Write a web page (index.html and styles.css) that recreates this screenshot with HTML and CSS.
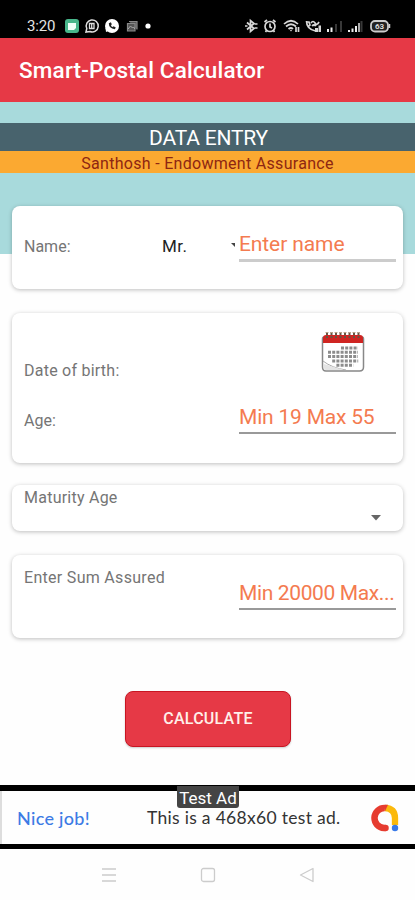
FILE: index.html
```html
<!DOCTYPE html>
<html lang="en">
<head>
<meta charset="utf-8">
<meta name="viewport" content="width=device-width, initial-scale=1">
<title>Smart-Postal Calculator</title>
<link rel="stylesheet" href="styles.css">
</head>
<body>
<div class="status">
  <span class="time">3:20</span>
  <svg class="status-left" width="90" height="16" viewBox="0 0 90 16">
    <rect x="1" y="1" width="14" height="14" rx="3" fill="#48b68b"/>
    <path d="M4 5h8v5l-2 2H4z" fill="#effff8"/>
    <path d="M22 14l.8-3.5A6 6 0 1 1 26 13.5z" fill="none" stroke="#ddd" stroke-width="1.5"/>
    <path d="M25.500 5.500h4.500v5h-4.500zM27.700 5.500v5" fill="none" stroke="#ddd" stroke-width="1.3"/>
    <circle cx="48" cy="8" r="7" fill="#fff"/>
    <path d="M42 14l-.5-4 3 3z" fill="#fff"/>
    <path d="M44.8 5.2q0 5 6 6l1-1.8-2.2-1.1-.9.8q-1.4-.6-1.7-1.9l.8-.9-.9-2z" fill="#222"/>
    <path d="M65 3.5h8v8M63.5 5.5h7.5v7.5h-7.5z" fill="#555" stroke="#888" stroke-width="1.2"/>
    <path d="M64 11l2.5-3 2 2 1-1 1.5 2" fill="none" stroke="#aaa"/>
    <circle cx="84" cy="8" r="2.6" fill="#fff"/>
  </svg>
  <svg class="status-right" width="148" height="16" viewBox="0 0 148 16">
    <g fill="none" stroke="#d8d8d8" stroke-width="1.700">
      <path d="M3 4.5l7 6-3.500 3V2.500L10 5.500l-7 6"/>
      <path d="M1 8h2.500M10.500 6h3M10.500 10h3"/>
      <circle cx="26" cy="8.500" r="5"/><path d="M20.500 4l2.500-2M31.500 4l-2.500-2M26 5.500v3.500l2 1M22.500 12.500l-1 1.500M29.500 12.500l1 1.500"/>
      <path d="M40 6q7-6.500 14 0M42 8.500q5-4.500 10 0M44.500 11q2.500-2 4.500 0M52 9v5M54.500 9v5"/>
      <path d="M62.500 3q0 8 9 10M62 4h3l1 3-1.500 1.500M67 5q2-3 4 0t4-1M68 8q2-2 4 0"/>
    </g>
    <path d="M46 12.500l1-1 1 1-1 1zM71 10h3v4h-3zM74.500 7.500H77V14h-2.500z" fill="#d8d8d8"/>
    <g fill="#ededed"><path d="M83 11h2v3h-2zM86.500 9.500h2V14h-2zM104 12h2v2h-2zM107.500 10.500h2V14h-2zM111 8h2v6h-2z"/></g>
    <path d="M91 6h2v8h-2zM96 3h2v11h-2zM116.500 3h2v11h-2z" fill="#383838"/>
    <path d="M114 5h2v9h-2z" fill="#aaa"/>
    <rect x="127" y="3" width="17" height="10.500" rx="4" fill="#222" stroke="#ccc" stroke-width="1.800"/>
    <path d="M145.500 6v4" stroke="#ccc" stroke-width="1.500"/>
    <text x="135.500" y="11" text-anchor="middle" class="battery">63</text>
  </svg>
</div>
<header class="appbar"><h1>Smart-Postal Calculator</h1></header>
<main>
  <h2>DATA ENTRY</h2>
  <p class="plan">Santhosh - Endowment Assurance</p>
  <form class="cards">
    <section class="card name-card">
      <span class="label">Name:</span>
      <span class="prefix">Mr.</span>
      <svg class="mini" width="4" height="4" viewBox="0 0 4 4"><path d="M0 0h4v4z" fill="#444"/></svg>
      <span class="field thick">Enter name</span>
    </section>
    <section class="card birth-card">
      <div class="row dob">
        <span class="label">Date of birth:</span>
        <svg class="calendar" width="44" height="44" viewBox="0 0 44 44">
          <path d="M3 7h38q1.500 0 1.500 2v28q0 4-4 4H5q-3.500 0-3.500-4V9Q1.500 7 3 7z" fill="#fff" stroke="#888" stroke-width="1.500"/>
          <path d="M2 13V8q0-3 3-3h34q3 0 3 3v5z" fill="#cf2522"/>
          <path d="M2 31q9 7 23 9" fill="none" stroke="#aaa"/><path d="M3 34l20 6H5q-2 0-2-3z" fill="#e4e4e4"/>
          <path d="M6 3v5M10.500 3v5M15 3v5M19.500 3v5M24 3v5M28.500 3v5M33 3v5M37.500 3v5" stroke="#654" stroke-width="2" stroke-dasharray="2 1"/>
          <path d="M4.500 2.500h3M9 2.500h3M13.500 2.500h3M18 2.500h3M22.500 2.500h3M27 2.500h3M31.500 2.500h3M36 2.500h3" stroke="#b9a28c"/>
          <g fill="none" stroke="#8c8c8c" stroke-width="3" stroke-dasharray="3 1.200"><path d="M20 18h17M7 22.300h30M7 26.600h30M11.200 30.900h26M15.400 35.200h17"/></g>
        </svg>
      </div>
      <div class="row age">
        <span class="label">Age:</span>
        <span class="field age-field">Min 19 Max 55</span>
      </div>
    </section>
    <section class="card maturity-card">
      <span class="label">Maturity Age</span>
      <svg class="arrow" width="10" height="6" viewBox="0 0 10 6"><path d="M0 0h10L5 5.500z" fill="#666"/></svg>
    </section>
    <section class="card sum-card">
      <span class="label">Enter Sum Assured</span>
      <span class="field">Min 20000 Max...</span>
    </section>
    <button type="button">CALCULATE</button>
  </form>
</main>
<aside class="ad">
  <span class="badge">Test Ad</span>
  <span class="nice">Nice job!</span>
  <span class="copy">This is a 468x60 test ad.</span>
  <svg class="admob" width="28" height="28" viewBox="0 0 28 28">
    <path d="M14.500 24H13A10 10 0 0 1 14 4" fill="none" stroke="#e63c30" stroke-width="6.500"/>
    <circle cx="14.500" cy="24" r="3.250" fill="#e63c30"/>
    <path d="M14 4Q24 4.500 24 14v7" fill="none" stroke="#fbb90c" stroke-width="6.300"/>
    <path d="M14 .8l3 0-3 6.500z" fill="#e63c30"/>
    <circle cx="24" cy="24" r="3.200" fill="#3879e8"/>
  </svg>
</aside>
<nav>
  <svg width="16" height="16" viewBox="0 0 16 16"><path d="M1 2h14M1 8h14M1 14h14" stroke="#ccc" stroke-width="1.300"/></svg>
  <svg width="16" height="16" viewBox="0 0 16 16"><rect x="1.500" y="1.500" width="13" height="13" rx="2" fill="none" stroke="#ccc" stroke-width="1.300"/></svg>
  <svg width="16" height="16" viewBox="0 0 16 16"><path d="M14 1.500v13L1.500 8z" fill="none" stroke="#ccc" stroke-width="1.300" stroke-linejoin="round"/></svg>
</nav>
</body>
</html>
```
FILE: styles.css
```css
* { box-sizing: border-box; }
body { margin: 0; width: 415px; height: 900px; overflow: hidden; background: #fefefe; font-family: Roboto, "Liberation Sans", sans-serif; display: flex; flex-direction: column; }
svg { display: block; flex: none; }
h1, h2, p { margin: 0; font-weight: 400; white-space: nowrap; }
.status { height: 38px; background: #000; color: #e4e4e4; display: flex; align-items: flex-start; padding: 18px 0 0 27px; }
.time { width: 37px; font-size: 15px; line-height: 16px; letter-spacing: -0.2px; }
.status-right { margin-left: 90px; }
.battery { font-size: 8px; font-weight: 700; fill: #ddd; }
.appbar { height: 64px; background: #e63946; color: #fff; padding-left: 19px; display: flex; align-items: center; }
h1 { font-size: 22.5px; font-weight: 500; line-height: 64px; letter-spacing: 0.18px; }
main { height: 683px; padding-top: 21px; background: linear-gradient(#a8dadc 152px, #fefefe 152px); }
h2 { height: 28px; background: #48636d; color: #fff; text-align: center; font-size: 21px; line-height: 30px; letter-spacing: -0.2px; text-indent: 2px; }
.plan { height: 22px; background: #fba931; color: #8e2612; text-align: center; font-size: 16px; line-height: 25px; letter-spacing: 0.3px; }
.cards { padding: 33px 12px 0; display: flex; flex-direction: column; }
.card { background: #fff; border-radius: 8px; box-shadow: 0 1px 4px rgba(0,0,0,.26); padding: 0 7px 0 12px; display: flex; white-space: nowrap; }
.label { color: #757575; font-size: 16px; line-height: 20px; letter-spacing: 0.24px; }
.field { width: 157px; height: 29px; margin-left: auto; border-bottom: 2px solid #999; color: #f47b50; font-size: 21px; line-height: 24px; letter-spacing: -0.37px; }
.field.thick { border-bottom: 3px solid #ccc; margin-left: 4px; letter-spacing: -0.1px; }
.field.age-field { letter-spacing: -0.2px; }
.name-card { height: 83px; margin-bottom: 24px; }
.name-card .label { width: 138px; margin-top: 31px; letter-spacing: 0; }
.prefix { width: 69px; margin-top: 30px; font-size: 17px; line-height: 21px; letter-spacing: 0.4px; color: #222; }
.mini { margin-top: 37px; }
.name-card .field { margin-top: 27px; line-height: 22px; }
.birth-card { height: 150px; margin-bottom: 22px; flex-direction: column; }
.row { display: flex; }
.dob { height: 92px; }
.dob .label { margin-top: 48px; }
.calendar { margin: 17px 31px 0 auto; }
.age .label { margin-top: 6px; letter-spacing: 0; }
.maturity-card { height: 46px; margin-bottom: 24px; }
.maturity-card .label { margin-top: 3px; }
.arrow { margin: 30px 15px 0 auto; }
.sum-card { height: 83px; margin-bottom: 53px; }
.sum-card .label { margin-top: 13px; letter-spacing: 0.3px; }
.sum-card .field { margin-top: 26px; }
button { width: 166px; height: 56px; margin-left: 113px; border: 1px solid #c81522; border-radius: 8px; background: #e63946; color: #fff0ea; font: 500 16px/54px Roboto, sans-serif; letter-spacing: 0.25px; padding: 0; box-shadow: 0 1px 2px rgba(0,0,0,.2); }
.ad { position: relative; height: 64px; border-top: 6px solid #000; border-bottom: 5px solid #000; display: flex; align-items: center; padding-left: 17px; background: #fefefe; white-space: nowrap; box-shadow: inset 2px 0 #ddd; font-size: 17px; }
.badge { position: absolute; left: 177px; top: -5px; width: 62px; height: 22px; border-radius: 0 0 3px 3px; background: #444; color: #fff; text-align: center; font-size: 17px; line-height: 25px; }
.nice { width: 130px; color: #3c7be5; font-family: Lato, sans-serif; font-size: 18px; font-weight: 500; letter-spacing: 0.3px; }
.copy { width: 224px; color: #333; font-family: Lato, sans-serif; font-size: 17.5px; letter-spacing: 0.3px; }
nav { height: 51px; display: flex; justify-content: center; gap: 83px; padding-top: 18px; }
```
